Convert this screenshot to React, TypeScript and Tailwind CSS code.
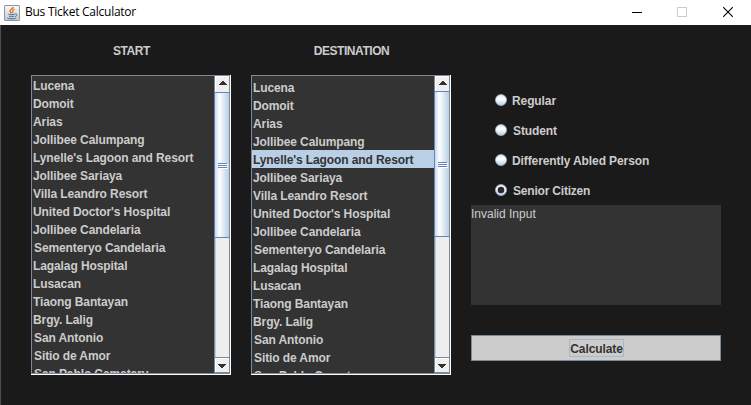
import React, { useState } from "react";

const STOPS = [
  "Lucena",
  "Domoit",
  "Arias",
  "Jollibee Calumpang",
  "Lynelle's Lagoon and Resort",
  "Jollibee Sariaya",
  "Villa Leandro Resort",
  "United Doctor's Hospital",
  "Jollibee Candelaria",
  "Sementeryo Candelaria",
  "Lagalag Hospital",
  "Lusacan",
  "Tiaong Bantayan",
  "Brgy. Lalig",
  "San Antonio",
  "Sitio de Amor",
  "San Pablo Cemetery",
];

function JavaIcon() {
  return (
    <svg className="h-4 w-4" viewBox="0 0 16 16" fill="none">
      <defs>
        <linearGradient id="java-tile" x1="0" y1="0" x2="0" y2="1">
          <stop offset="0" stopColor="#fafafa" />
          <stop offset="1" stopColor="#bfcbd6" />
        </linearGradient>
      </defs>
      <rect x="0.5" y="0.5" width="15" height="15" rx="0.5" fill="url(#java-tile)" stroke="#8c969f" />
      <path d="M9 2C9.300 4 5.300 4.600 6.200 6.500C6.500 7.300 7.200 7.600 7.300 8.500" stroke="#e8792b" strokeWidth="1.600" />
      <path d="M10.500 4.200C7.600 5.500 9.300 6.600 8.400 8.300" stroke="#e8792b" strokeWidth="1.300" />
      <path d="M4.300 9.200C5.500 10 9 9.900 10.800 9.200M5 11.200C6.500 11.900 8.800 11.900 10 11.200M3.200 12.800C4 14.200 10.500 14.200 12.200 12.900" stroke="#41698c" />
      <path d="M11 9C13.600 8.200 13.600 11 11 11.600" stroke="#41698c" strokeWidth="0.900" />
    </svg>
  );
}

function TitleBar() {
  return (
    <header className="flex h-[25px] items-center bg-white pl-1">
      <JavaIcon />
      <h1 className="ml-[5px] flex-1 pb-[2px] font-['Open_Sans','Noto_Sans',sans-serif] text-[12px] leading-[22px] tracking-[-0.25px] text-black">
        Bus Ticket Calculator
      </h1>
      <div className="flex h-[25px] w-[138px] text-black">
        <button className="flex w-[46px] items-start pl-[19px]" aria-label="Minimize">
          <svg className="mt-3 h-px w-[10px]" shapeRendering="crispEdges">
            <rect width="10" height="1" fill="#000" />
          </svg>
        </button>
        <button className="flex w-[46px] items-start pl-[18px]" aria-label="Maximize">
          <span className="mt-[7px] h-[10px] w-[10px] border border-[#cccccc]" />
        </button>
        <button className="flex w-[46px] items-start pl-[18px]" aria-label="Close">
          <svg className="mt-[7px] h-[10px] w-[10px]" viewBox="0 0 10 10">
            <path d="M0.200 0.200L9.800 9.800M9.800 0.200L0.200 9.800" stroke="#000" strokeWidth="1.100" />
          </svg>
        </button>
      </div>
    </header>
  );
}

function ScrollBar({ top, height }: { top: string; height: string }) {
  return (
    <div className="flex w-4 shrink-0 flex-col border-x border-[#7a8a99] bg-[#eeeeee]">
      <div className={`flex shrink-0 items-start justify-center border-t border-l border-white bg-[#f0f0f0] pt-1 ${top}`}>
        <svg className="h-[4px] w-[8px]" viewBox="0 0 8 4" shapeRendering="crispEdges">
          <path d="M3 0H5V1H6V2H7V3H8V4H0V3H1V2H2V1H3Z" fill="#333" />
        </svg>
      </div>
      <div
        className={`-ml-px flex shrink-0 flex-col items-center justify-center gap-px border-y border-l border-[#6382bf] bg-linear-to-r from-[#c8d9ec] via-[#ffffff] via-30% to-[#b8cfe5] ${height}`}
      >
        {[0, 1, 2].map((n) => (
          <span key={n} className="h-px w-[9px] bg-[#6382bf] shadow-[1px_1px_0_white]" />
        ))}
      </div>
      <div className="flex-1 border-l border-[#b8cfe5]" />
      <div className="flex h-4 shrink-0 items-start justify-center border-y border-[#7a8a99] bg-[#f0f0f0] pt-[6px] shadow-[inset_1px_1px_0_white]">
        <svg className="h-[4px] w-[8px]" viewBox="0 0 8 4" shapeRendering="crispEdges">
          <path d="M0 0H8V1H7V2H6V3H5V4H3V3H2V2H1V1H0Z" fill="#333" />
        </svg>
      </div>
    </div>
  );
}

function StopList({
  title,
  selected,
  inset,
  arrow,
  thumb,
}: {
  title: string;
  selected?: number;
  inset: string;
  arrow: string;
  thumb: string;
}) {
  return (
    <section className="w-[200px]">
      <h2 className="mt-[17px] h-[33px] pl-px text-center leading-[18px] tracking-[-0.45px]">{title}</h2>
      <div className="h-[300px] border-r border-b border-white">
        <div className="flex h-[299px] border-y border-l border-[#7a8a99] bg-[#333333]">
          <ul className={`flex-1 overflow-hidden tracking-[-0.1px] ${inset}`}>
            {STOPS.map((stop, i) => (
              <li
                key={stop}
                className={`h-[18px] leading-[20px] whitespace-nowrap ${stop.startsWith("S") ? "pl-[2px]" : "pl-px"} ${
                  i === selected ? "bg-[#b8cfe5] text-[#333333]" : ""
                }`}
              >
                {stop}
              </li>
            ))}
          </ul>
          <ScrollBar top={arrow} height={thumb} />
        </div>
      </div>
    </section>
  );
}

function Radio({ checked }: { checked: boolean }) {
  return (
    <svg className="h-3 w-3" viewBox="0 0 12 12">
      <defs>
        <linearGradient id="radio-face" x1="0" y1="0" x2="0" y2="1">
          <stop offset="0" stopColor="#dce7f2" />
          <stop offset="0.4" stopColor="#ffffff" />
          <stop offset="1" stopColor="#b8cfe5" />
        </linearGradient>
      </defs>
      <circle cx="6" cy="6" r="5.500" fill="url(#radio-face)" stroke="#9fb2c4" strokeWidth="0.800" />
      {checked && <circle cx="6" cy="6" r="3.300" fill="#2a2a2a" />}
    </svg>
  );
}

const FARES = [
  { label: "Regular", gap: "gap-[5px]" },
  { label: "Student", gap: "gap-[6px]" },
  { label: "Differently Abled Person", gap: "gap-[5px]" },
  { label: "Senior Citizen", gap: "gap-[6px] tracking-[-0.2px]" },
];

export default function App() {
  const [fare, setFare] = useState(3);
  return (
    <div className="h-[405px] w-[751px] overflow-hidden bg-[#1a1a1a] font-['Liberation_Sans',Arial,sans-serif] text-[12px] font-bold text-[#cccccc]">
      <div className="font-normal">
        <TitleBar />
      </div>
      <main className="flex h-[380px] gap-5 border-l border-[#4d4d4d] pl-[30px]">
        <StopList title="START" inset="" arrow="h-4" thumb="h-[146px]" />
        <StopList title="DESTINATION" selected={4} inset="pt-[2px]" arrow="h-[15px]" thumb="h-[146px]" />
        <section className="w-[250px] pt-[60px]">
          <div className="h-[120px] pl-6 tracking-[-0.1px]">
            {FARES.map((f, i) => (
              <div key={f.label} className={`flex h-[30px] items-center ${f.gap}`} onClick={() => setFare(i)}>
                <Radio checked={fare === i} />
                <span className="pt-[2px]">{f.label}</span>
              </div>
            ))}
          </div>
          <div className="h-[100px] bg-[#333333] font-normal leading-[18px]">Invalid Input</div>
          <button className="mt-[30px] flex h-[26px] w-full items-center justify-center border border-[#7a8a99] bg-[#cccccc] text-[#333333]">
            <span className="ml-px h-[18px] border border-[#a3b8cc] leading-[18px] tracking-[-0.1px]">Calculate</span>
          </button>
        </section>
      </main>
    </div>
  );
}
